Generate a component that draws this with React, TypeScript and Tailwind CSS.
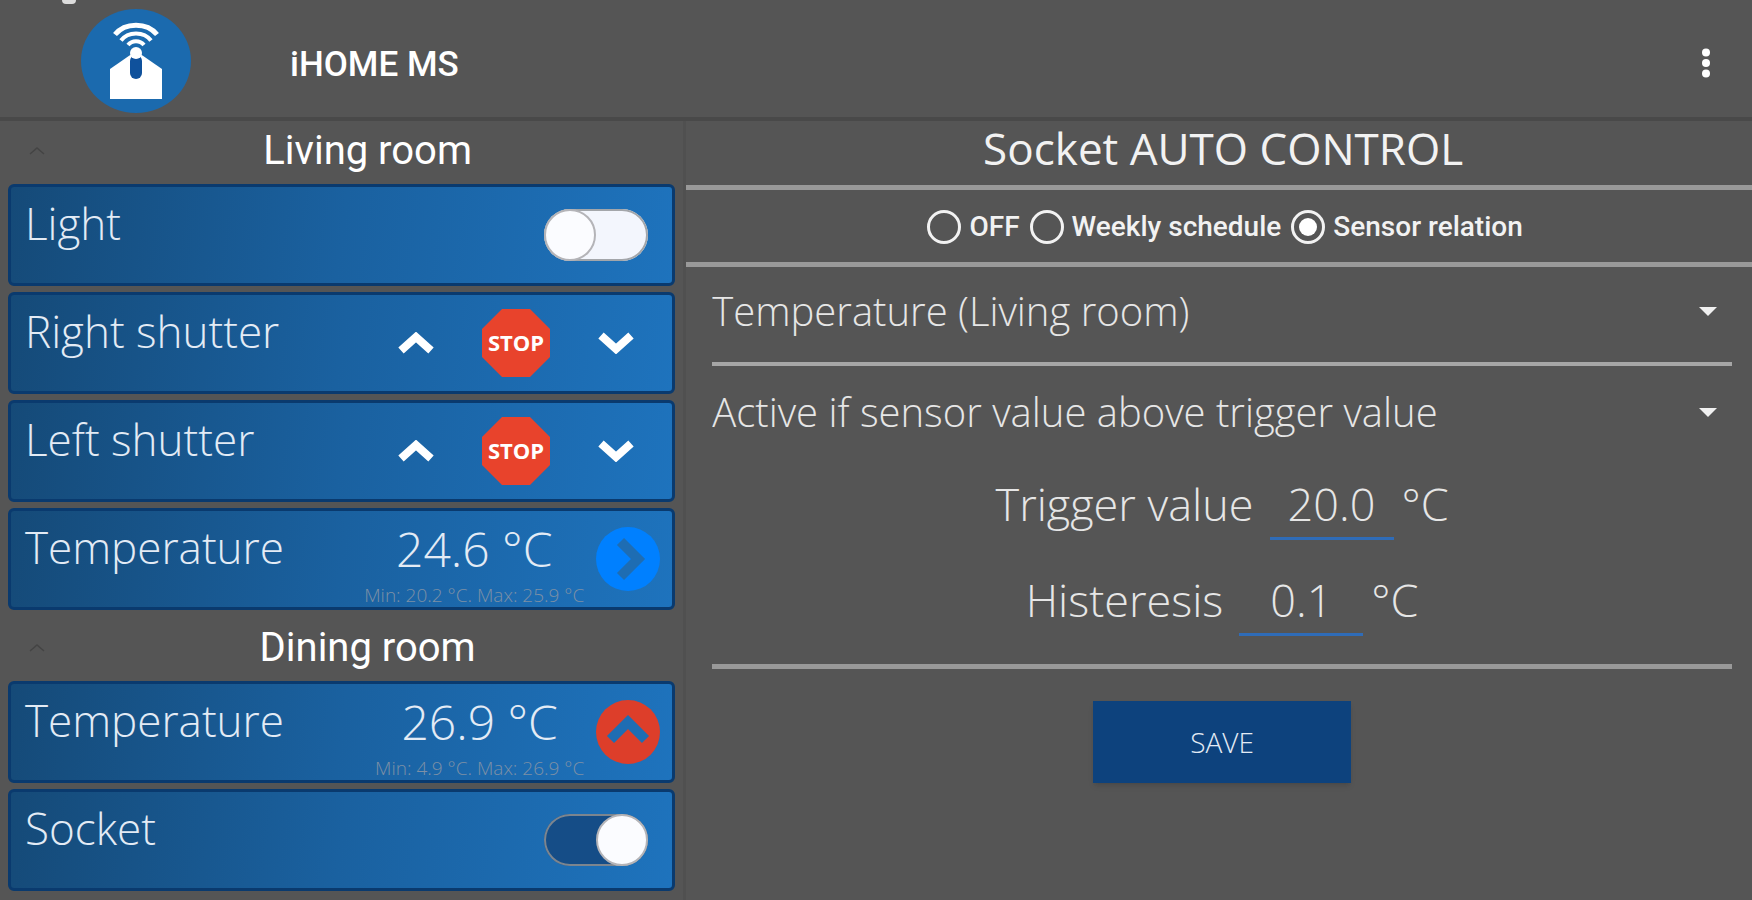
import { useState, type ReactNode } from "react";

const Logo = () => (
  <svg viewBox="0 0 110 104" className="h-[104px] w-[110px]" aria-hidden="true">
    <ellipse cx="55" cy="52" rx="55" ry="52" fill="#1b6aae" />
    <g fill="none" stroke="#fff">
      <path d="M34 25.5 C44 13 66 13 76 25.5" strokeWidth="5" />
      <path d="M40 31.5 C47 22 63 22 70 31.5" strokeWidth="4" />
      <path d="M47 36 C51 31 59 31 63 36" strokeWidth="4" />
    </g>
    <path d="M29 60 L55 42 L81 60 V90 H29 Z" fill="#fff" />
    <rect x="49" y="46" width="12" height="24" rx="6" fill="#0f519c" />
    <circle cx="55" cy="44" r="6" fill="#fff" />
  </svg>
);

const Chevron = ({ down = false }: { down?: boolean }) => (
  <svg viewBox="0 0 36 22" className={`h-[22px] w-9 ${down ? "rotate-180" : ""}`} aria-hidden="true">
    <path d="M3 18.5 L18 5 L33 18.5" fill="none" stroke="#fff" strokeWidth="8" />
  </svg>
);

const StopSign = () => (
  <svg viewBox="0 0 68 68" className="size-[68px]" aria-hidden="true">
    <path d="M20 0 H48 L68 20 V48 L48 68 H20 L0 48 V20 Z" fill="#e8432c" />
    <text
      x="34"
      y="42"
      textAnchor="middle"
      className="fill-white font-['Open_Sans',sans-serif] text-[22px] font-bold"
    >
      STOP
    </text>
  </svg>
);

const TrendIcon = ({ trend }: { trend: "steady" | "up" }) => (
  <svg viewBox="-32 -32 64 64" className="size-16 shrink-0" aria-hidden="true">
    <circle r="32" fill={trend === "up" ? "#dd3e2a" : "#0080ff"} />
    <path
      d={trend === "up" ? "M-17.5 7.5 L0 -10 L17.5 7.5" : "M-7.5 -17.5 L10 0 L-7.5 17.5"}
      fill="none"
      stroke="#1e6db3"
      strokeWidth="10"
    />
  </svg>
);

const Card = ({ children }: { children: ReactNode }) => (
  <li className="flex h-[102px] items-center justify-between rounded-md border-3 border-[#0a3a6e] bg-linear-[98deg] from-[#154a78] via-[#1a61a0] to-[#1e73bd]">
    {children}
  </li>
);

const CardLabel = ({ children }: { children: ReactNode }) => (
  <span className="self-start pt-3 pl-3.5 text-[44px] leading-12 font-light text-[#e3ebf5]">
    {children}
  </span>
);

function SwitchCard({ name, initial }: { name: string; initial: boolean }) {
  const [on, setOn] = useState(initial);
  return (
    <Card>
      <label className="flex h-full w-full items-center justify-between pr-6">
        <CardLabel>{name}</CardLabel>
        <input
          type="checkbox"
          role="switch"
          checked={on}
          onChange={(e) => setOn(e.target.checked)}
          className="peer sr-only"
        />
        <span className="flex h-[52px] w-[104px] rounded-full bg-[#f3f6fd] ring-2 ring-[#a3a6aa] ring-inset peer-checked:justify-end peer-checked:bg-[#154d87] peer-checked:ring-[#7c858f]">
          <span className="size-[52px] rounded-full border-2 border-[#b4b4b8] bg-[#fbfcff]" />
        </span>
      </label>
    </Card>
  );
}

function ShutterCard({ name }: { name: string }) {
  const button = "flex h-full w-[100px] items-center justify-center";
  return (
    <Card>
      <CardLabel>{name}</CardLabel>
      <div className="flex h-full pr-1.5">
        <button type="button" className={button} aria-label={`${name} up`}>
          <Chevron />
        </button>
        <button type="button" className={button} aria-label={`${name} stop`}>
          <StopSign />
        </button>
        <button type="button" className={button} aria-label={`${name} down`}>
          <Chevron down />
        </button>
      </div>
    </Card>
  );
}

interface TemperatureCardProps {
  value: string;
  range: string;
  trend: "steady" | "up";
}

function TemperatureCard({ value, range, trend }: TemperatureCardProps) {
  return (
    <Card>
      <CardLabel>Temperature</CardLabel>
      <div className="flex h-full items-center gap-3 pr-3">
        <div className="flex flex-col items-center self-start pt-3">
          <span className="text-[48px] leading-[52px] font-light text-[#e3ebf5]">{value}</span>
          <span className="mt-2 text-[19px] leading-6 font-light text-[#7d90a6]">{range}</span>
        </div>
        <TrendIcon trend={trend} />
      </div>
    </Card>
  );
}

const RoomHeader = ({ name, className }: { name: string; className: string }) => (
  <h2 className={`relative flex items-center justify-center pl-13 font-[Roboto,sans-serif] text-[40px] leading-12 text-white ${className}`}>
    <svg viewBox="0 0 16 8" className="absolute left-[21px] h-2 w-4" aria-hidden="true">
      <path d="M1 7 L8 1 L15 7" fill="none" stroke="#444" strokeWidth="1.5" />
    </svg>
    {name}
  </h2>
);

function SelectField({ label, options }: { label: string; options: string[] }) {
  return (
    <div className="relative">
      <select
        aria-label={label}
        className="h-16 w-full appearance-none text-[40px] leading-16 font-light text-[#e6e6e6] outline-none"
      >
        {options.map((option) => (
          <option key={option} className="bg-[#555]">
            {option}
          </option>
        ))}
      </select>
      <svg viewBox="0 0 18 9" className="pointer-events-none absolute top-7 right-[15px] h-[9px] w-[18px]" aria-hidden="true">
        <path d="M0 0 H18 L9 9 Z" fill="#f0f0f0" />
      </svg>
    </div>
  );
}

function NumberField({ id, label, initial }: { id: string; label: string; initial: string }) {
  const [value, setValue] = useState(initial);
  return (
    <div className="flex justify-center text-[45px] leading-18 font-light text-[#e6e6e6]">
      <label htmlFor={id}>{label}</label>
      <input
        id={id}
        inputMode="decimal"
        value={value}
        onChange={(e) => setValue(e.target.value)}
        className="mr-2 ml-4 h-[72px] w-[124px] border-b-3 border-[#2f6cb8] pt-[3px] text-center outline-none"
      />
      <span>°C</span>
    </div>
  );
}

const MODES = ["OFF", "Weekly schedule", "Sensor relation"];

export default function App() {
  const [mode, setMode] = useState("Sensor relation");

  return (
    <div className="flex min-h-screen flex-col bg-[#555] font-['Open_Sans',sans-serif] text-white">
      <header className="relative flex h-[121px] items-center border-b-4 border-[#494949] pt-1 pr-8 pl-[81px]">
        <span className="absolute top-0 left-[62px] h-1 w-3.5 rounded-b-sm bg-[#dcdcdc]" />
        <Logo />
        <h1 className="mt-2 ml-[99px] flex-1 font-[Roboto,sans-serif] text-[35px] leading-10 font-medium">
          iHOME MS
        </h1>
        <button type="button" className="mt-1 flex h-12 w-7 items-center justify-center" aria-label="More options">
          <svg viewBox="0 0 10 32" className="h-8 w-2.5" fill="#fff" aria-hidden="true">
            <circle cx="5" cy="5.5" r="4" />
            <circle cx="5" cy="16" r="4" />
            <circle cx="5" cy="26.5" r="4" />
          </svg>
        </button>
      </header>

      <div className="flex flex-1">
        <aside className="w-[39%] px-2">
          <RoomHeader name="Living room" className="h-[63px] pb-1" />
          <ul className="flex flex-col gap-1.5">
            <SwitchCard name="Light" initial={false} />
            <ShutterCard name="Right shutter" />
            <ShutterCard name="Left shutter" />
            <TemperatureCard value="24.6 °C" range="Min: 20.2 °C. Max: 25.9 °C" trend="steady" />
          </ul>
          <RoomHeader name="Dining room" className="h-[71px] pt-1" />
          <ul className="flex flex-col gap-1.5">
            <TemperatureCard value="26.9 °C" range="Min: 4.9 °C. Max: 26.9 °C" trend="up" />
            <SwitchCard name="Socket" initial />
          </ul>
        </aside>

        <main className="flex-1 border-l-3 border-[#505050]">
          <h2 className="flex h-16 items-center justify-center pb-2.5 pl-2 text-[44px] leading-14 text-[#f2f2f2]">
            Socket AUTO CONTROL
          </h2>

          <fieldset className="flex h-[82px] items-center justify-center gap-2.5 border-y-5 border-[#999] pt-0.5 pl-3 font-[Roboto,sans-serif] text-[28px] leading-8 font-medium text-[#f2f2f2]">
            {MODES.map((name) => (
              <label key={name} className="flex items-center gap-2">
                <input
                  type="radio"
                  name="mode"
                  checked={mode === name}
                  onChange={() => setMode(name)}
                  className="grid size-[34px] appearance-none place-content-center rounded-full border-3 border-[#f2f2f2] before:size-[18px] before:rounded-full checked:before:bg-white"
                />
                {name}
              </label>
            ))}
          </fieldset>

          <form className="pr-5 pl-[26px]" onSubmit={(e) => e.preventDefault()}>
            <div className="border-b-4 border-[#a6a6a6] pt-3 pb-[19px]">
              <SelectField label="Sensor" options={["Temperature (Living room)", "Temperature (Dining room)"]} />
            </div>
            <div className="pt-3.5">
              <SelectField
                label="Condition"
                options={[
                  "Active if sensor value above trigger value",
                  "Active if sensor value below trigger value",
                ]}
              />
            </div>
            <div className="flex flex-col gap-6 border-b-5 border-[#999] pt-6 pb-7">
              <NumberField id="trigger" label="Trigger value" initial="20.0" />
              <NumberField id="histeresis" label="Histeresis" initial="0.1" />
            </div>
            <button
              type="submit"
              className="mx-auto mt-8 block h-[82px] w-[258px] bg-[#0d427d] text-[28px] font-light text-[#e3ebf5] shadow-md"
            >
              SAVE
            </button>
          </form>
        </main>
      </div>
    </div>
  );
}
